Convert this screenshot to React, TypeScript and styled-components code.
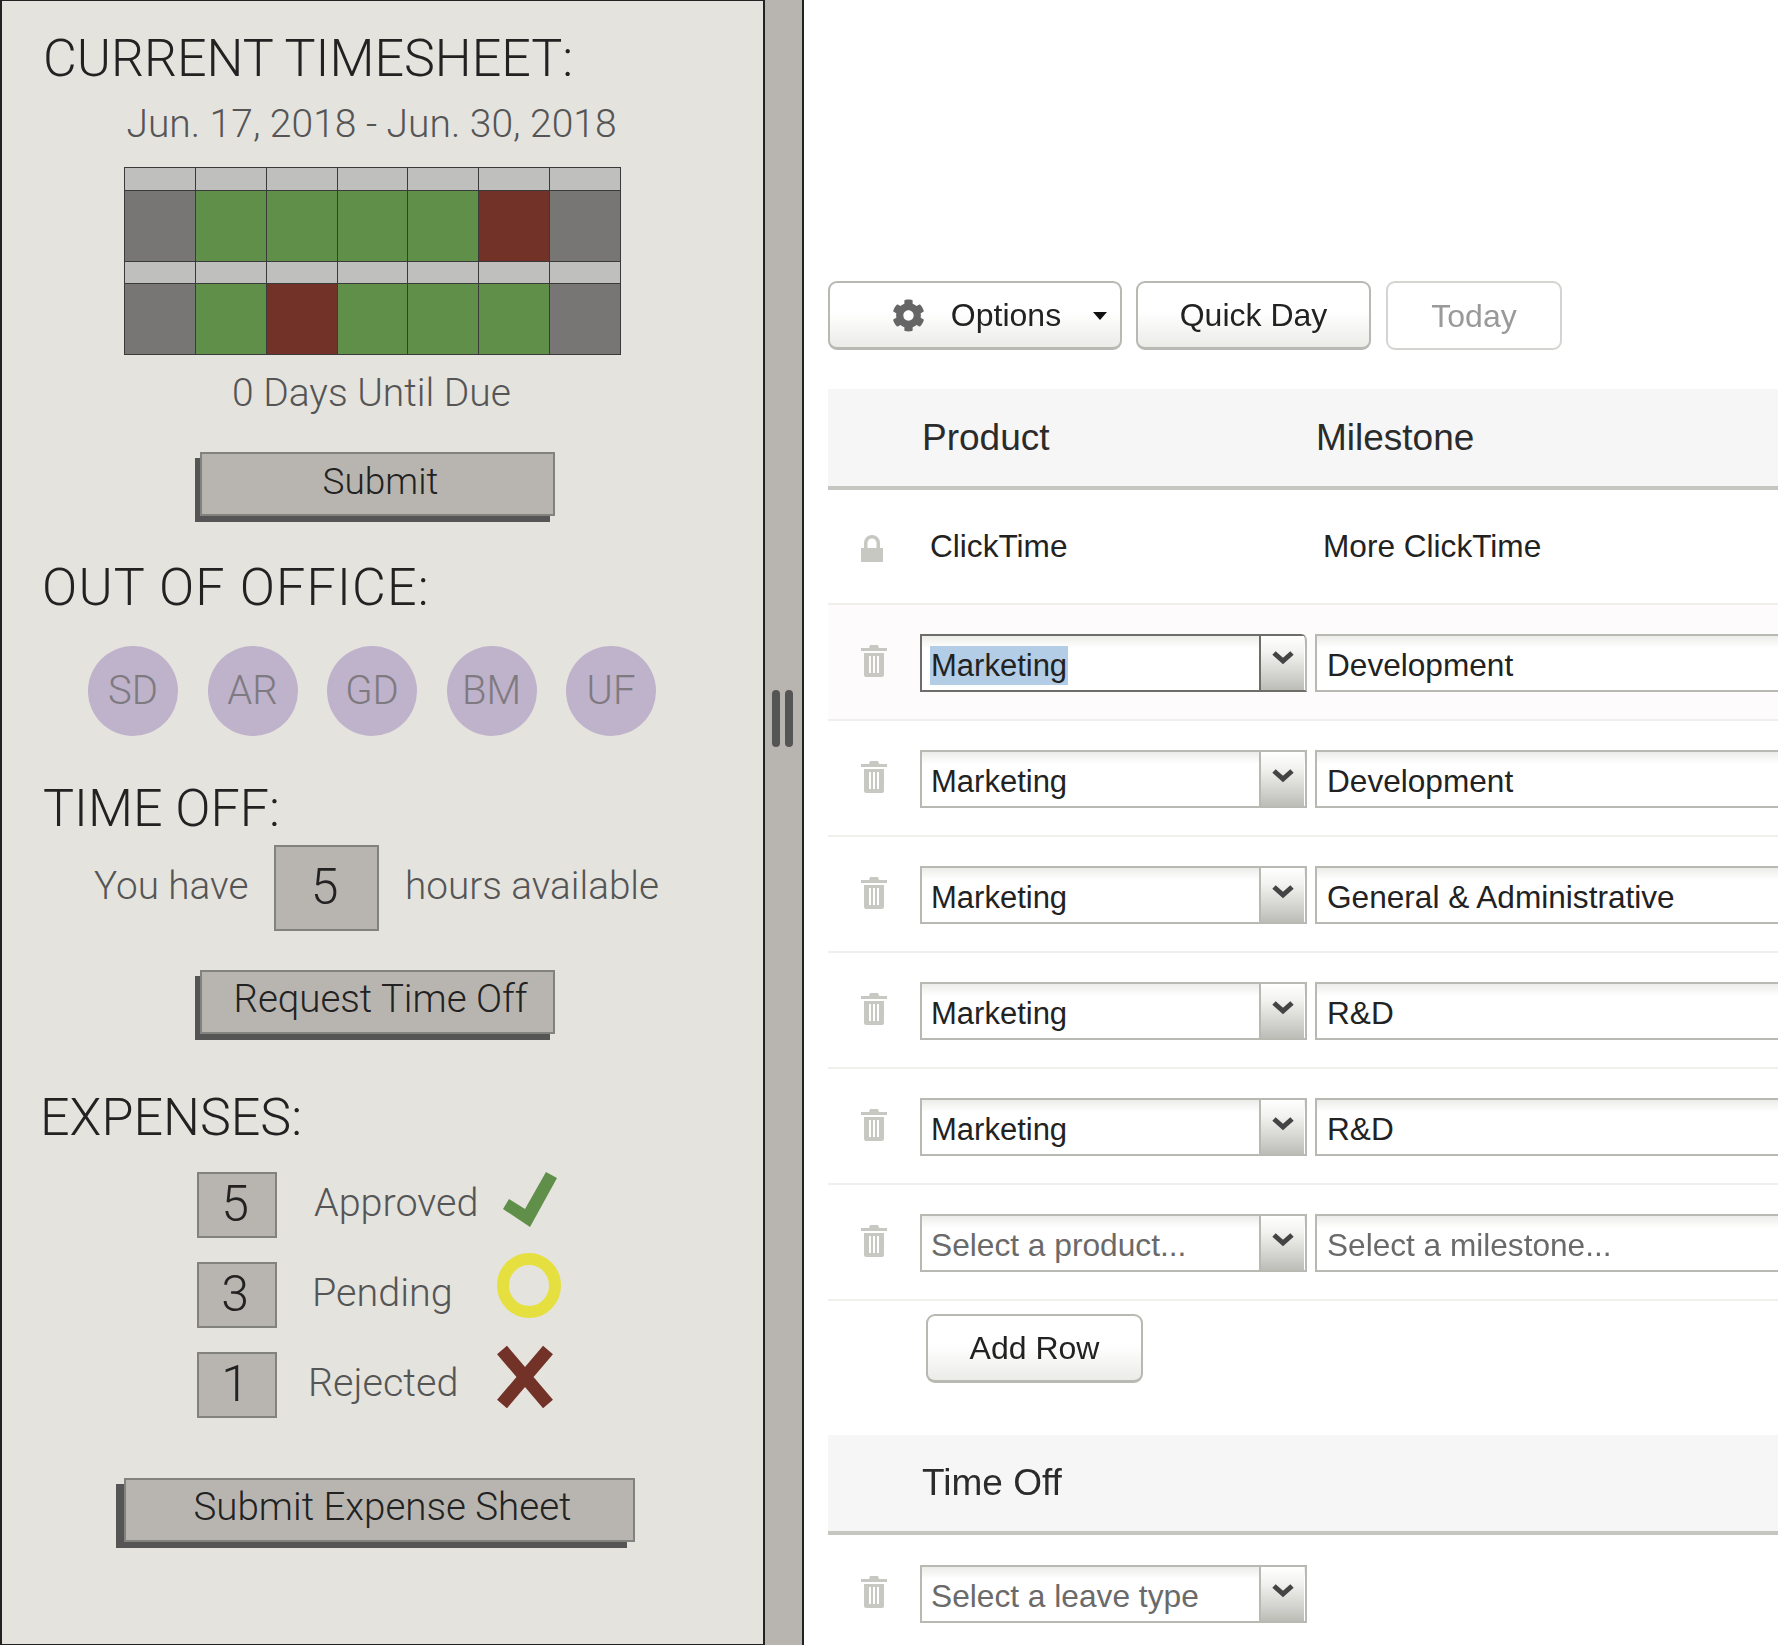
import React from 'react';
import styled, { createGlobalStyle, css } from 'styled-components';
import { FaCog } from 'react-icons/fa';

const Global = createGlobalStyle`
  html, body { margin: 0; padding: 0; background: #fff; }
  #root { width: 1778px; height: 1645px; overflow: hidden; }
`;

const Page = styled.div`
  display: flex;
  width: 1778px;
  height: 1645px;
`;

const Side = styled.aside`
  box-sizing: border-box;
  width: 763px;
  height: 1645px;
  flex: none;
  background: #e4e3de;
  border: solid #222;
  border-width: 1px 0 1px 2px;
  font-family: Roboto, "Liberation Sans", sans-serif;
  font-weight: 300;
  display: flex;
  flex-direction: column;
  align-items: flex-start;
`;

const Heading = styled.h2<{ $top: number; $left?: number; $ls?: number }>`
  margin: ${p => p.$top}px 0 0 ${p => p.$left ?? 41}px;
  font-size: 52px;
  line-height: 40px;
  font-weight: 300;
  color: #222;
  letter-spacing: ${p => p.$ls ?? 0}px;
  white-space: nowrap;
`;

const Caption = styled.div<{ $top: number }>`
  margin: ${p => p.$top}px 0 0;
  width: 739px;
  text-align: center;
  font-size: 39px;
  line-height: 40px;
  color: #555;
  white-space: nowrap;
`;

const Calendar = styled.div`
  margin: 23px 0 0 122px;
  display: grid;
  grid-template-columns: repeat(7, 70.85px);
  grid-template-rows: 23px 71px 22px 71px;
  border: solid #3a3a3a;
  border-width: 1px 0 0 1px;
`;

const dayColor = { h: '#bfbfbd', o: '#777674', g: '#5f8f49', r: '#733228' } as const;

const Day = styled.div<{ $k: keyof typeof dayColor }>`
  box-sizing: border-box;
  background: ${p => dayColor[p.$k]};
  border: solid #3a3a3a;
  border-width: 0 1px 1px 0;
`;

const SideButton = styled.button<{ $w: number; $top: number; $left: number; $dx: number; $size?: number }>`
  box-sizing: border-box;
  flex: none;
  width: ${p => p.$w}px;
  height: 64px;
  margin: ${p => p.$top}px 0 0 ${p => p.$left}px;
  padding: 0 0 6px 6px;
  background: #b8b5b0;
  border: 2px solid #82827f;
  box-shadow: ${p => p.$dx}px 6px 0 #555;
  font: 300 ${p => p.$size ?? 38.5}px/1 Roboto, "Liberation Sans", sans-serif;
  color: #222;
  white-space: nowrap;
`;

const People = styled.div`
  display: flex;
  gap: 29.5px;
  margin: 38px 0 0 86px;
`;

const Person = styled.div`
  width: 90px;
  height: 90px;
  border-radius: 50%;
  background: #bfb2cb;
  color: #7e7a80;
  font-size: 40px;
  line-height: 90px;
  text-align: center;
`;

const HoursRow = styled.div`
  display: flex;
  align-items: center;
  margin: 16px 0 0 92px;
  font-size: 38.7px;
  color: #555;
  white-space: nowrap;
`;

const CountBox = styled.div<{ $w: number; $h: number }>`
  box-sizing: border-box;
  flex: none;
  width: ${p => p.$w}px;
  height: ${p => p.$h}px;
  padding: 0 4px 3px 0;
  display: flex;
  align-items: center;
  justify-content: center;
  background: #b8b5b0;
  border: 2px solid #82827f;
  color: #222;
  font-size: 50px;
`;

const HaveLabel = styled.span`
  width: 180px;
  padding-bottom: 6px;
`;

const HoursLabel = styled.span`
  margin-left: 26px;
  padding-bottom: 6px;
`;

const ExpenseList = styled.div`
  display: flex;
  flex-direction: column;
  gap: 24px;
  margin: 34px 0 0 195px;
`;

const ExpenseRow = styled.div`
  display: flex;
  align-items: center;
  height: 66px;
  font-size: 39.5px;
  color: #555;
`;

const ExpenseLabel = styled.span<{ $shift?: number }>`
  box-sizing: border-box;
  width: 223px;
  padding: 0 0 5px ${p => 37 - (p.$shift ?? 0)}px;
  white-space: nowrap;
`;

const StatusIcon = styled.svg`
  flex: none;
  width: 66px;
  height: 66px;
  overflow: visible;
`;

const Divider = styled.div`
  box-sizing: border-box;
  flex: none;
  width: 41px;
  height: 1645px;
  background: #b8b5b0;
  border: solid #222;
  border-width: 0 2px;
  display: flex;
  gap: 5px;
  padding: 690px 0 0 7px;
`;

const Grip = styled.div`
  width: 8px;
  height: 57px;
  border-radius: 4px;
  background: #555;
`;

const Main = styled.main`
  flex: 1;
  min-width: 0;
  overflow: hidden;
  padding-left: 24px;
  font-family: "Liberation Sans", Arial, sans-serif;
  color: #222;
  filter: blur(0.55px);
`;

const Toolbar = styled.div`
  display: flex;
  margin-top: 281px;
  height: 69px;
`;

const ToolButton = styled.button<{ $w: number; $ml?: number; $muted?: boolean; $pl?: number }>`
  box-sizing: border-box;
  position: relative;
  display: flex;
  align-items: center;
  justify-content: center;
  width: ${p => p.$w}px;
  height: 69px;
  margin-left: ${p => p.$ml ?? 0}px;
  padding: 0 0 0 ${p => p.$pl ?? 0}px;
  border: 2px solid #b9b9b3;
  border-bottom-width: 3px;
  border-radius: 9px;
  background: linear-gradient(#fff, #fff 45%, #ebebe8);
  font: 32px/1 "Liberation Sans", Arial, sans-serif;
  color: ${p => (p.$muted ? '#999' : '#222')};
  ${p => p.$muted && css`background: #fff; border-color: #d4d4d0; border-bottom-width: 2px;`}
`;

const OptionsGear = styled(FaCog)`
  margin: 0 26px 0 0;
  color: #666;
  font-size: 33px;
`;

const Caret = styled.span`
  position: absolute;
  right: 13px;
  top: 29px;
  width: 0;
  height: 0;
  border: 7px solid transparent;
  border-top: 8px solid #111;
  border-bottom: 0;
`;

const Band = styled.div<{ $top: number; $h: number }>`
  box-sizing: border-box;
  display: flex;
  align-items: center;
  height: ${p => p.$h}px;
  margin-top: ${p => p.$top}px;
  padding: 0 0 0 94px;
  background: #f6f6f6;
  border-bottom: 4px solid #c6c6c0;
  font-size: 37px;
  color: #2b2b2b;
`;

const BandCol = styled.span`
  width: 394px;
`;

const TableRow = styled.div<{ $h?: number; $tint?: boolean; $plain?: boolean }>`
  box-sizing: border-box;
  display: flex;
  align-items: center;
  height: ${p => p.$h ?? 116}px;
  background: ${p => (p.$tint ? '#fdfbfc' : '#fff')};
  border-bottom: ${p => (p.$plain ? '0' : '2px solid #efefec')};
`;

const IconCell = styled.div`
  flex: none;
  box-sizing: border-box;
  width: 92px;
  padding: 0 0 0 33px;
  display: flex;
  align-items: center;
`;

const RowIcon = styled.svg<{ $lift: number }>`
  display: block;
  margin-top: ${p => p.$lift}px;
  color: #c8c8c3;
`;

const PlainCell = styled.span<{ $w: number; $pl: number }>`
  box-sizing: border-box;
  width: ${p => p.$w}px;
  padding-left: ${p => p.$pl}px;
  font-size: 31.6px;
  flex: none;
`;

const Select = styled.div<{ $focus?: boolean }>`
  box-sizing: border-box;
  flex: none;
  display: flex;
  width: 387px;
  height: 58px;
  margin-top: 1px;
  border: 2px solid ${p => (p.$focus ? '#6d6d6a' : '#b9b9b3')};
  background: linear-gradient(#ecece9, #fff 12px);
  ${p => p.$focus && css`border-right-color: #b9b9b3; border-top-right-radius: 6px;`}
`;

const SelectText = styled.div<{ $placeholder?: boolean }>`
  flex: 1;
  display: flex;
  align-items: center;
  padding: 6px 0 0 9px;
  font-size: ${p => (p.$placeholder ? 31.7 : 31)}px;
  color: ${p => (p.$placeholder ? '#6a6a6a' : '#222')};
`;

const Highlight = styled.span`
  background: #b3cde6;
  line-height: 39px;
  margin-left: -1px;
  padding: 0 1px;
`;

const SelectArrow = styled.div<{ $focus?: boolean }>`
  box-sizing: border-box;
  flex: none;
  width: 45px;
  display: flex;
  justify-content: center;
  padding-top: ${p => (p.$focus ? 14 : 16)}px;
  margin-right: 1px;
  border-left: 2px solid ${p => (p.$focus ? '#6d6d6a' : '#b9b9b3')};
  background: linear-gradient(#fff, #f2f2f0 30%, #bdbdb8);
`;

const Field = styled.div<{ $placeholder?: boolean }>`
  box-sizing: border-box;
  flex: none;
  display: flex;
  align-items: center;
  width: 480px;
  height: 58px;
  margin: 1px 0 0 8px;
  padding: 6px 0 0 10px;
  border: 2px solid #b9b9b3;
  border-right: 0;
  background: linear-gradient(#ecece9, #fff 12px);
  font-size: 31.6px;
  color: ${p => (p.$placeholder ? '#6a6a6a' : '#222')};
`;

const AddRow = styled(ToolButton)`
  margin: 13px 0 0 98px;
`;

const Trash = () => (
  <RowIcon $lift={-2} width="26" height="32" viewBox="0 0 26 32" fill="currentColor">
    <path d="M9 0h8l1 3h8v3H0V3h8z" />
    <path fillRule="evenodd" d="M3 8h20v22a2 2 0 0 1-2 2H5a2 2 0 0 1-2-2zM8 11v17h2V11zM12 11v17h2V11zM16 11v17h2V11z" />
  </RowIcon>
);

const Lock = () => (
  <RowIcon $lift={4} width="22" height="27" viewBox="0 0 22 27" fill="currentColor">
    <path fillRule="evenodd" d="M3 13V8a8 8 0 0 1 16 0v5h3v14H0V13zM6.5 13h9V8a4.5 4.5 0 0 0-9 0z" />
  </RowIcon>
);

const Chevron = () => (
  <svg width="24" height="16" viewBox="0 0 24 16">
    <path d="M3 3l9 8 9-8" fill="none" stroke="#444" strokeWidth="5" />
  </svg>
);

const week1 = ['o', 'g', 'g', 'g', 'g', 'r', 'o'] as const;
const week2 = ['o', 'g', 'r', 'g', 'g', 'g', 'o'] as const;
const head = ['h', 'h', 'h', 'h', 'h', 'h', 'h'] as const;
const cells = [...head, ...week1, ...head, ...week2];

const rows: { p: string; m: string; ph?: boolean }[] = [
  { p: 'Marketing', m: 'Development' },
  { p: 'Marketing', m: 'General & Administrative' },
  { p: 'Marketing', m: 'R&D' },
  { p: 'Marketing', m: 'R&D' },
  { p: 'Select a product...', m: 'Select a milestone...', ph: true },
];

export default function App() {
  return (
    <Page>
      <Global />
      <Side>
        <Heading $top={38}>CURRENT TIMESHEET:</Heading>
        <Caption $top={25}>Jun. 17, 2018 - Jun. 30, 2018</Caption>
        <Calendar>
          {cells.map((k, i) => (
            <Day key={i} $k={k} />
          ))}
        </Calendar>
        <Caption $top={18}>0 Days Until Due</Caption>
        <SideButton $w={355} $top={39} $left={198} $dx={-5} $size={37}>Submit</SideButton>
        <Heading $top={52} $left={40} $ls={1.2}>OUT OF OFFICE:</Heading>
        <People>
          {['SD', 'AR', 'GD', 'BM', 'UF'].map(n => (
            <Person key={n}>{n}</Person>
          ))}
        </People>
        <Heading $top={53}>TIME OFF:</Heading>
        <HoursRow>
          <HaveLabel>You have</HaveLabel>
          <CountBox $w={105} $h={86}>5</CountBox>
          <HoursLabel>hours available</HoursLabel>
        </HoursRow>
        <SideButton $w={355} $top={39} $left={198} $dx={-5}>Request Time Off</SideButton>
        <Heading $top={64} $left={38}>EXPENSES:</Heading>
        <ExpenseList>
          <ExpenseRow>
            <CountBox $w={80} $h={66}>5</CountBox>
            <ExpenseLabel>Approved</ExpenseLabel>
            <StatusIcon viewBox="0 1 66 66">
              <polygon points="3,38 9,28 25,38 46,1 57,7 30,56" fill="#5f8f49" />
            </StatusIcon>
          </ExpenseRow>
          <ExpenseRow>
            <CountBox $w={80} $h={66}>3</CountBox>
            <ExpenseLabel $shift={2}>Pending</ExpenseLabel>
            <StatusIcon viewBox="0 1 66 66">
              <ellipse cx="29" cy="24.5" rx="26" ry="26.5" fill="none" stroke="#e5e040" strokeWidth="12" />
            </StatusIcon>
          </ExpenseRow>
          <ExpenseRow>
            <CountBox $w={80} $h={66}>1</CountBox>
            <ExpenseLabel $shift={6}>Rejected</ExpenseLabel>
            <StatusIcon viewBox="0 1 66 66">
              <path d="M2 -1L48 53M48 -1L2 53" fill="none" stroke="#733228" strokeWidth="13" />
            </StatusIcon>
          </ExpenseRow>
        </ExpenseList>
        <SideButton $w={511} $top={60} $left={122} $dx={-8}>Submit Expense Sheet</SideButton>
      </Side>
      <Divider>
        <Grip />
        <Grip />
      </Divider>
      <Main>
        <Toolbar>
          <ToolButton $w={294} $pl={3}>
            <OptionsGear />
            Options
            <Caret />
          </ToolButton>
          <ToolButton $w={235} $ml={14}>Quick Day</ToolButton>
          <ToolButton $w={176} $ml={15} $muted>Today</ToolButton>
        </Toolbar>
        <Band $top={39} $h={101}>
          <BandCol>Product</BandCol>
          <span>Milestone</span>
        </Band>
        <TableRow $h={115}>
          <IconCell><Lock /></IconCell>
          <PlainCell $w={394} $pl={10}>ClickTime</PlainCell>
          <PlainCell $w={400} $pl={9}>More ClickTime</PlainCell>
        </TableRow>
        <TableRow $tint>
          <IconCell><Trash /></IconCell>
          <Select $focus>
            <SelectText><Highlight>Marketing</Highlight></SelectText>
            <SelectArrow $focus><Chevron /></SelectArrow>
          </Select>
          <Field>Development</Field>
        </TableRow>
        {rows.map((r, i) => (
          <TableRow key={i}>
            <IconCell><Trash /></IconCell>
            <Select>
              <SelectText $placeholder={r.ph}>{r.p}</SelectText>
              <SelectArrow><Chevron /></SelectArrow>
            </Select>
            <Field $placeholder={r.ph}>{r.m}</Field>
          </TableRow>
        ))}
        <AddRow $w={217}>Add Row</AddRow>
        <Band $top={52} $h={100}>Time Off</Band>
        <TableRow $plain>
          <IconCell><Trash /></IconCell>
          <Select>
            <SelectText $placeholder>Select a leave type</SelectText>
            <SelectArrow><Chevron /></SelectArrow>
          </Select>
        </TableRow>
      </Main>
    </Page>
  );
}
